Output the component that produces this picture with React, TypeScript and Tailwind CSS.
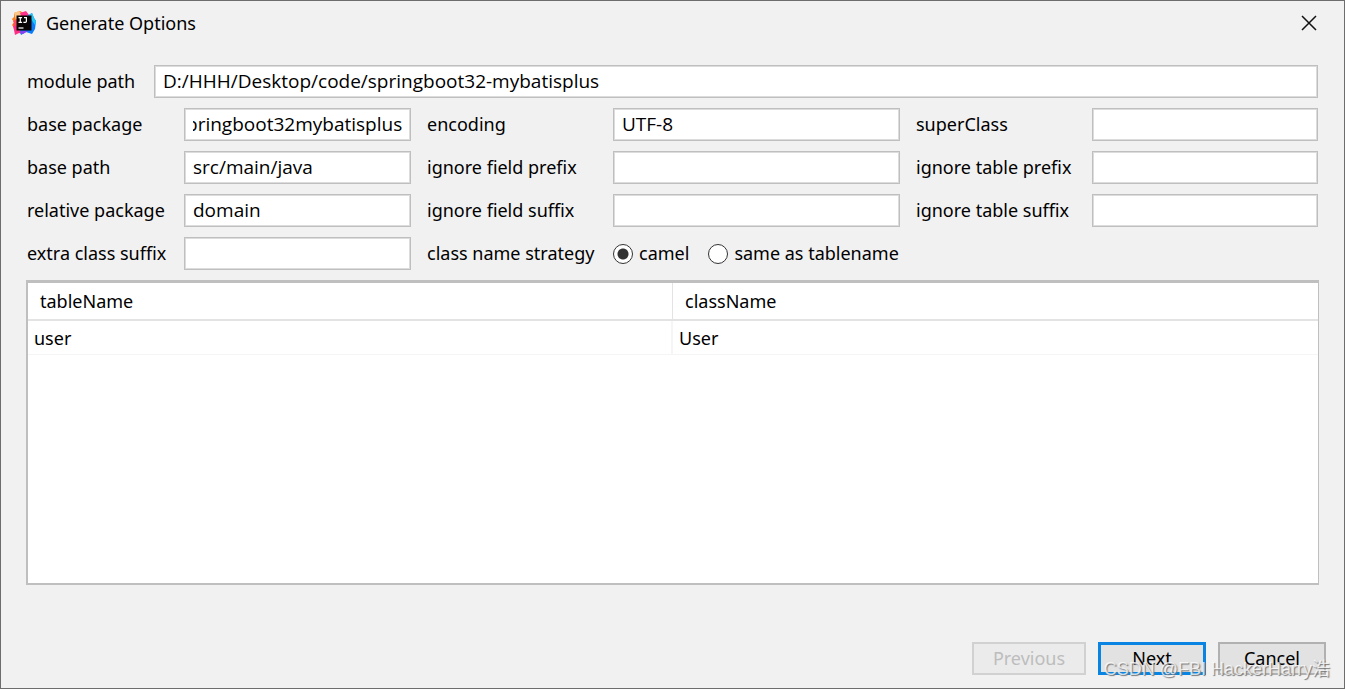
import { useEffect, useRef, type ReactNode } from 'react';

const inputClass =
  "h-[33px] w-full min-w-0 border border-[#bfbfbf] bg-white px-2 pb-[2px] font-['Open_Sans','Noto_Sans',sans-serif] text-[19px] text-black shadow-[inset_0_0_0_1px_#dcdcdc] outline-none";

function Field({ id, label, value = '' }: { id: string; label: string; value?: string }) {
  const ref = useRef<HTMLInputElement>(null);

  // Long values show their end, as after typing.
  useEffect(() => {
    if (ref.current) ref.current.scrollLeft = ref.current.scrollWidth;
  }, []);

  return (
    <>
      <label htmlFor={id} className="pb-[2px] whitespace-nowrap">
        {label}
      </label>
      <input ref={ref} id={id} type="text" defaultValue={value} className={inputClass} />
    </>
  );
}

function Radio({ label, checked = false }: { label: string; checked?: boolean }) {
  return (
    <label className="flex items-center gap-[6px] whitespace-nowrap">
      <input
        type="radio"
        name="strategy"
        defaultChecked={checked}
        className="size-5 shrink-0 appearance-none rounded-full border border-[#333] bg-white checked:bg-[radial-gradient(circle,#333_0_5px,#fff_6px)]"
      />
      <span className="pb-[2px]">{label}</span>
    </label>
  );
}

function Logo() {
  return (
    <svg viewBox="0 0 24 24" className="size-6" aria-hidden="true">
      <path d="M2 2 8 0l6 3-2 15-9 0-3-4 2-3-2-3 2-2z" fill="#fc801d" />
      <path d="M2 2 7 0l3 3-6 6z" fill="#fdc98a" />
      <path d="M8 2 14 0l3 4-7 3z" fill="#ff318c" />
      <path d="M1 10l4-2v8l-4-2 1-2z" fill="#fe4a5c" />
      <path d="M1 15l4-1 9 6-4 3-3-1-4 2-1-5z" fill="#ff2f86" />
      <path d="M15 5l5-3 2 5 2 3-1 8-3 5-6-2-5 3-1-4z" fill="#087cfa" />
      <path d="M17 4l3-2 2 5 2 3-1 4-4-6z" fill="#22c7f5" />
      <path d="M9 20h7l-5 3-3-1z" fill="#8b3ff2" />
      <rect x="4.5" y="4.5" width="15" height="15" fill="#080405" />
      <path d="M6.5 6.7h3.6M8.3 6.7v4.6M6.5 11.3h3.6M12 6.7h2.4v3.6q0 1-1 1h-2" fill="none" stroke="#fff" strokeWidth="1.2" />
      <path d="M6.5 17h5" stroke="#fff" strokeWidth="1.2" />
    </svg>
  );
}

function DialogButton({ children, className, disabled }: { children: ReactNode; className: string; disabled?: boolean }) {
  return (
    <button type="button" disabled={disabled} className={`flex h-[33px] items-center justify-center pb-[2px] ${className}`}>
      {children}
    </button>
  );
}

export default function App() {
  return (
    <main className="relative flex min-h-screen flex-col border border-[#6d6d6d] bg-[#f1f1f1] font-['Noto_Sans','Open_Sans',sans-serif] text-lg leading-6 text-black">
      <header className="flex h-11 items-center justify-between pr-[27px] pl-[11px]">
        <div className="flex items-center gap-[10px]">
          <Logo />
          <h1>Generate Options</h1>
        </div>
        <button type="button" aria-label="Close">
          <svg viewBox="0 0 16 16" className="size-4" fill="none" stroke="#111" strokeWidth="1.5">
            <path d="M1 1l14 14M15 1 1 15" />
          </svg>
        </button>
      </header>

      <form className="mt-5 px-[26px]">
        <div className="mb-[10px] grid grid-cols-[111px_1fr] items-center gap-4">
          <Field id="modulePath" label="module path" value="D:/HHH/Desktop/code/springboot32-mybatisplus" />
        </div>
        <div className="grid grid-cols-[141px_227fr_170px_287fr_160px_226fr] items-center gap-x-4 gap-y-[10px]">
          <Field id="basePackage" label="base package" value="com.example.springboot32mybatisplus" />
          <Field id="encoding" label="encoding" value="UTF-8" />
          <Field id="superClass" label="superClass" />
          <Field id="basePath" label="base path" value="src/main/java" />
          <Field id="fieldPrefix" label="ignore field prefix" />
          <Field id="tablePrefix" label="ignore table prefix" />
          <Field id="relativePackage" label="relative package" value="domain" />
          <Field id="fieldSuffix" label="ignore field suffix" />
          <Field id="tableSuffix" label="ignore table suffix" />
          <Field id="classSuffix" label="extra class suffix" />
          <span className="pb-[2px] whitespace-nowrap">class name strategy</span>
          <div role="radiogroup" aria-label="class name strategy" className="flex min-w-0 gap-[19px]">
            <Radio label="camel" checked />
            <Radio label="same as tablename" />
          </div>
        </div>
      </form>

      <section className="mx-[25px] mt-[10px] flex-1 border-t-[3px] border-r border-b-2 border-l-2 border-[#bfbfbf] bg-white">
        <table className="w-full table-fixed border-separate border-spacing-0 text-left">
          <thead>
            <tr className="h-[38px]">
              <th className="border-r border-b-2 border-[#e3e3e3] p-0 pl-3 font-normal">tableName</th>
              <th className="border-b-2 border-[#e3e3e3] p-0 pl-3 font-normal">className</th>
            </tr>
          </thead>
          <tbody>
            <tr className="h-[34px]">
              <td className="border-r-2 border-b border-[#f5f5f5] p-0 pl-[6px]">user</td>
              <td className="border-b border-[#f5f5f5] p-0 pl-[6px]">User</td>
            </tr>
          </tbody>
        </table>
      </section>

      <footer className="flex justify-end gap-3 pt-[57px] pr-[18px] pb-[13px]">
        <DialogButton disabled className="w-[114px] border-2 border-[#d1d1d1] bg-[#ebebeb] text-[#bdbdbd]">
          Previous
        </DialogButton>
        <DialogButton className="w-[108px] border-[3px] border-[#0a84e3] bg-[#e2e2e2]">Next</DialogButton>
        <DialogButton className="w-[108px] border-2 border-[#b1b1b1] bg-[#e2e2e2]">Cancel</DialogButton>
      </footer>

      <p className="pointer-events-none absolute right-[14px] bottom-[7px] font-['Liberation_Sans','Noto_Sans_CJK_SC',sans-serif] text-lg leading-6 whitespace-nowrap text-white/75 [text-shadow:1px_1px_1px_#777]">
        CSDN @FBI HackerHarry浩
      </p>
    </main>
  );
}
